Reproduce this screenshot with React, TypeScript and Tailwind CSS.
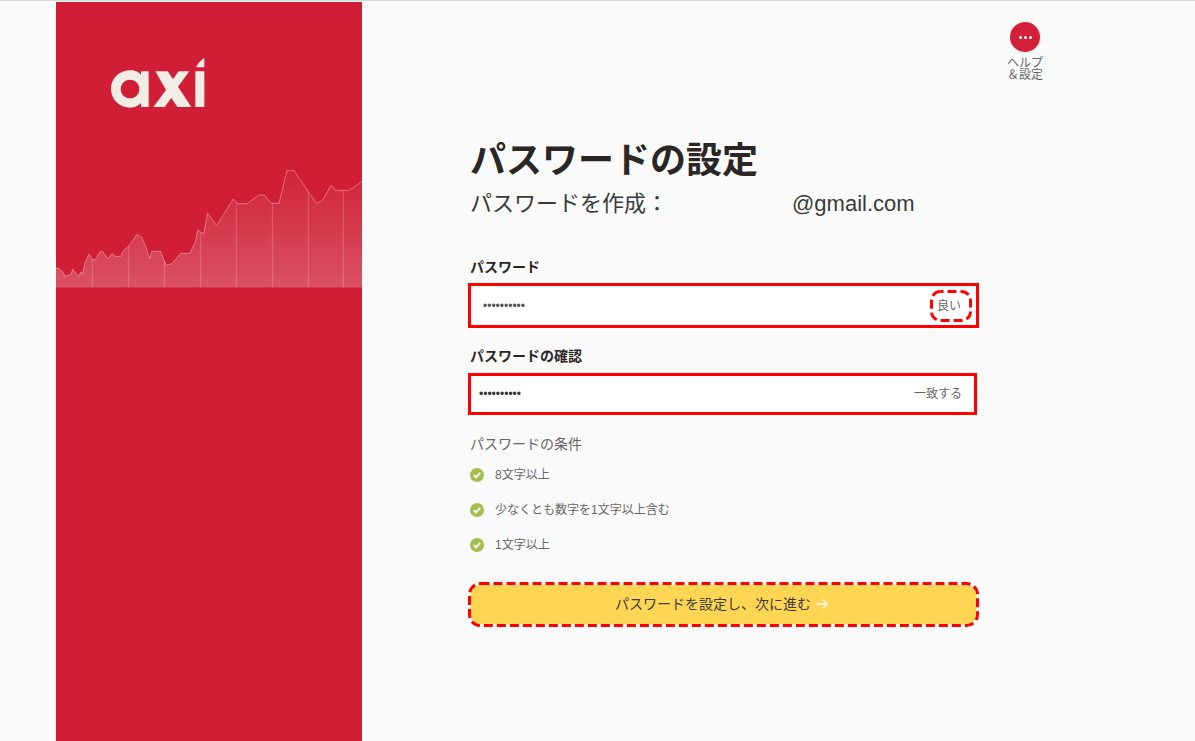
const jp = "font-['Liberation_Sans','Noto_Sans_CJK_JP',sans-serif]";

const pts: [number, number][] = [
  [0,325],[8,325],[20,335],[27,349],[45,343],[50,328],[68,349],[75,335],[80,342],[87,308],[99,283],[110,299],[118,299],[132,275],[140,275],[155,296],[168,281],[178,289],[195,289],[200,275],[222,254],[243,223],[258,233],[270,263],[281,296],[287,274],[314,274],[330,316],[347,311],[374,280],[401,280],[418,247],[425,211],[443,221],[455,160],[482,197],[532,117],[545,131],[573,131],[610,105],[625,105],[645,130],[669,130],[693,32],[714,32],[758,97],[782,131],[800,120],[825,76],[838,91],[880,91],[918,64],
];
const line = pts.map(([x, y]) => `${x},${y}`).join(" ");
const yAt = (x: number) => {
  for (let i = 1; i < pts.length; i++) {
    if (x <= pts[i][0]) {
      const [a, b] = pts[i - 1];
      const [c, d] = pts[i];
      return b + ((x - a) / (c - a)) * (d - b);
    }
  }
  return 64;
};

function Logo() {
  return (
    <svg width="95" height="50" viewBox="0 0 285 150" className="block" fill="#f1ece4">
      <path fillRule="evenodd" d="M58 37C73 37 85 43 90 51V40H113V147H90V135C83 143 72 149 58 149C25 149 0 124 0 92C0 61 25 37 58 37ZM57 65C41 65 29 77 29 93C29 109 41 121 57 121C73 121 85 109 85 93C85 77 73 65 57 65Z" />
      <polygon points="133,40 170,40 186,63 203,40 235,40 201,86 241,147 199,147 181,120 161,147 127,147 165,96" />
      <path d="M253 40H280V147H253ZM255 28C260 17 268 7 280 0V28Z" />
    </svg>
  );
}

function Chart() {
  return (
    <svg width="306" height="128" viewBox="0 0 918 384" className="block" preserveAspectRatio="none">
      <defs>
        <linearGradient id="chartFill" x1="0" y1="0" x2="0" y2="1">
          <stop offset="0" stopColor="#ffffff" stopOpacity="0.02" />
          <stop offset="1" stopColor="#ffffff" stopOpacity="0.23" />
        </linearGradient>
      </defs>
      <polygon points={`0,382 ${line} 918,382`} fill="url(#chartFill)" />
      {[109, 217, 325, 433, 541, 649, 757, 862].map((x) => (
        <line key={x} x1={x} x2={x} y1={yAt(x)} y2={382} stroke="#ffffff" strokeOpacity="0.2" strokeWidth="3" />
      ))}
      <polyline points={line} fill="none" stroke="#ffffff" strokeOpacity="0.35" strokeWidth="3" />
      <rect x="0" y="380" width="918" height="3" fill="#ffffff" fillOpacity="0.05" />
    </svg>
  );
}

function Check() {
  return (
    <svg width="14" height="14" viewBox="0 0 14 14" className="shrink-0">
      <circle cx="7" cy="7" r="7" fill="#a0bf4b" />
      <path d="M3.8 7.2L6 9.3L10.2 4.9" fill="none" stroke="#ffffff" strokeWidth="2" />
    </svg>
  );
}

function Rule({ text }: { text: string }) {
  return (
    <div className="flex items-center h-[35px]">
      <Check />
      <span className="ml-[11px] text-xs text-[#666666]">{text}</span>
    </div>
  );
}

export default function App() {
  return (
    <div className={`${jp} min-h-[741px] h-[741px] overflow-hidden bg-[#fafafa] border-t border-[#d9d9d9] flex pl-14 pt-px`}>
      <aside className="w-[306px] shrink-0 bg-[#cf1e36] flex flex-col">
        <div className="pl-[55px] pt-[56px]">
          <Logo />
        </div>
        <div className="mt-[52px]">
          <Chart />
        </div>
      </aside>
      <main className="w-[693px] shrink-0 flex flex-col">
        <div className="flex flex-col items-center self-end w-[60px] mt-[20px]">
          <div className="w-[30px] h-[30px] rounded-full bg-[#d31f38] shadow-sm flex items-center justify-center gap-[2px]">
            <i className="w-[3px] h-[3px] rounded-full bg-white" />
            <i className="w-[3px] h-[3px] rounded-full bg-white" />
            <i className="w-[3px] h-[3px] rounded-full bg-white" />
          </div>
          <div className="mt-[5px] text-xs leading-[12px] text-[#666666] text-center">
            ヘルプ
            <br />
            ＆設定
          </div>
        </div>
        <div className="ml-[106px] w-[511px] mt-[55px]">
          <div className="pl-[2px]">
            <h1 className="text-[36px] leading-[50px] font-bold text-[#2a2625]">パスワードの設定</h1>
            <p className="mt-[2px] text-[22px] leading-[32px] text-[#3a3a3a]">
              パスワードを作成：<span className="ml-[124px]">@gmail.com</span>
            </p>
          </div>
          <label className="block pl-[2px] mt-[37px] text-sm leading-[20px] font-bold text-[#2a2625]">パスワード</label>
          <div className="mt-[6px] h-[45px] border-[3px] border-[#ff0000] bg-white flex items-center justify-between pl-[12px] pr-[4px]">
            <span className="text-xs text-[#555555]">••••••••••</span>
            <span className="relative w-[42px] h-[32px] pl-[7px] flex items-center text-xs text-[#666666]">
              良い
              <svg width="42" height="32" className="absolute left-0 top-0" fill="none">
                <rect x="1.5" y="1.5" width="39" height="29" rx="9" stroke="#ff0000" strokeWidth="3" strokeDasharray="9 4" strokeDashoffset="6" />
              </svg>
            </span>
          </div>
          <label className="block pl-[2px] mt-[18px] text-sm leading-[20px] font-bold text-[#2a2625]">パスワードの確認</label>
          <div className="mt-[7px] w-[509px] h-[42px] border-[3px] border-[#ff0000] bg-white flex items-center justify-between pl-[8px] pr-[12px]">
            <span className="text-xs text-[#333333]">••••••••••</span>
            <span className="text-xs text-[#666666]">一致する</span>
          </div>
          <div className="pl-[2px] mt-[17px]">
            <div className="text-sm leading-[24px] text-[#666666]">パスワードの条件</div>
            <div className="mt-[1px]">
              <Rule text="8文字以上" />
              <Rule text="少なくとも数字を1文字以上含む" />
              <Rule text="1文字以上" />
            </div>
          </div>
          <div className="relative mt-[20px] h-[45px] p-[2px]">
            <button className="w-full h-full rounded-[10px] border border-[#fff7dc] bg-[#ffd653] flex items-center justify-center gap-[4px] pr-[3px] pb-[2px] text-sm text-[#3a3a3a]">
              パスワードを設定し、次に進む
              <svg width="14" height="14" viewBox="0 0 14 14" fill="none" stroke="#ffffff" strokeWidth="1.3">
                <path d="M1.5 7H12M7.5 2.5L12 7L7.5 11.5" />
              </svg>
            </button>
            <svg width="511" height="45" className="absolute left-0 top-0" fill="none">
              <rect x="1.5" y="1.5" width="508" height="42" rx="11" stroke="#ff0000" strokeWidth="3" strokeDasharray="9 4" />
            </svg>
          </div>
        </div>
      </main>
    </div>
  );
}
